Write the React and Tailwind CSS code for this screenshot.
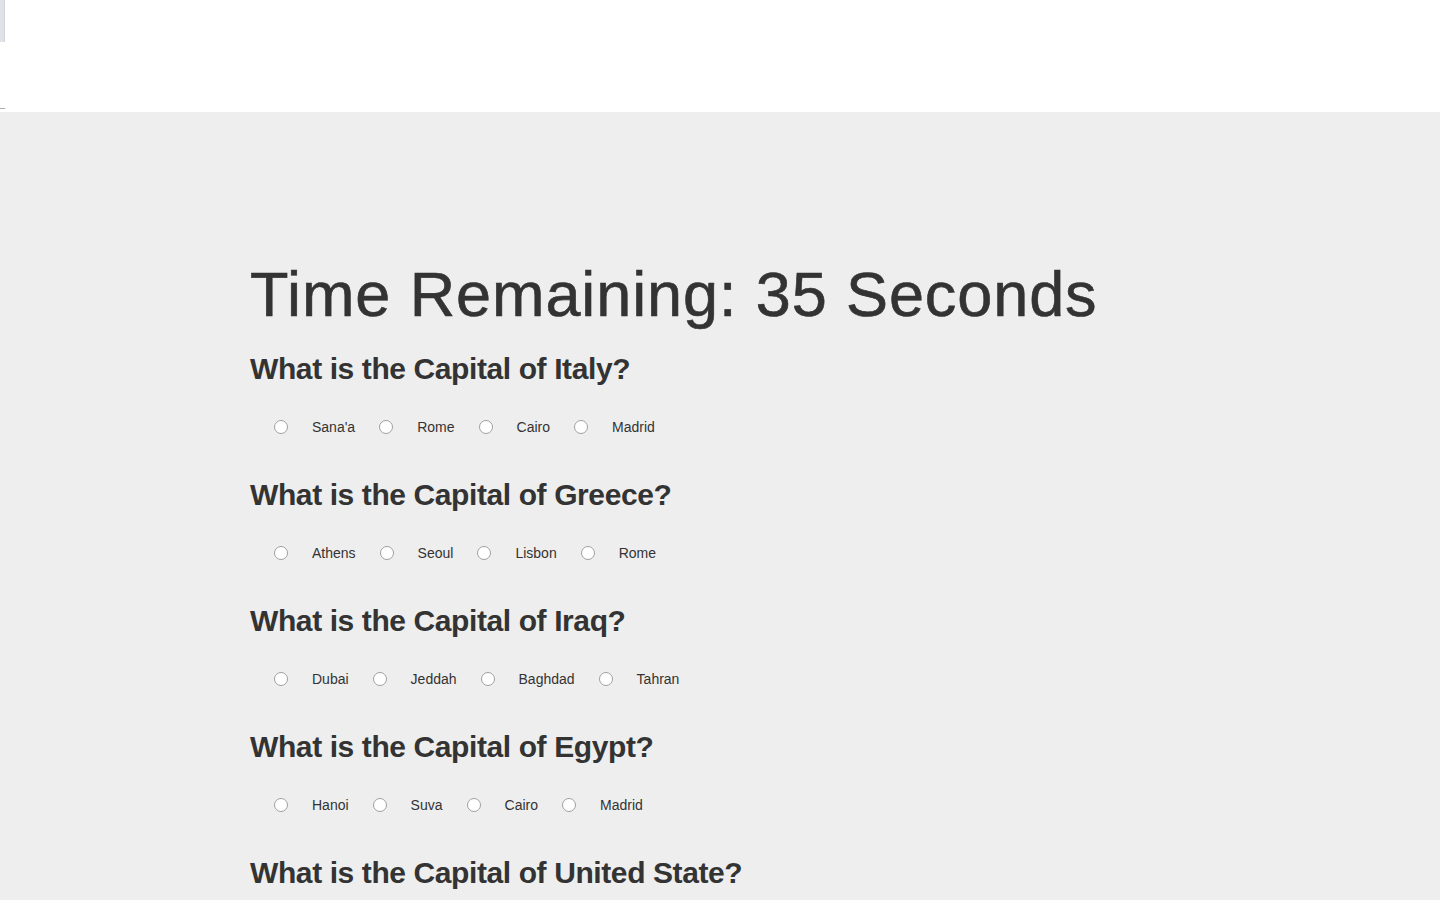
import React from "react";

const questions = [
  { q: "What is the Capital of Italy?", options: ["Sana'a", "Rome", "Cairo", "Madrid"] },
  { q: "What is the Capital of Greece?", options: ["Athens", "Seoul", "Lisbon", "Rome"] },
  { q: "What is the Capital of Iraq?", options: ["Dubai", "Jeddah", "Baghdad", "Tahran"] },
  { q: "What is the Capital of Egypt?", options: ["Hanoi", "Suva", "Cairo", "Madrid"] },
  { q: "What is the Capital of United State?", options: [] },
];

export default function App() {
  return (
    <div className="h-screen overflow-hidden bg-[#eeeeee] font-['Liberation_Sans',Arial,sans-serif] text-[#333333]">
      {/* top bar */}
      <div className="h-[112px] bg-white flex flex-col justify-between">
        <div className="w-[5px] h-[42px] bg-[#dfe3e8] border-r border-[#d0d5db]" />
        <div className="w-[5px] h-px bg-[#aaaaaa] mb-[3px]" />
      </div>

      <div className="pl-[250px] pt-[148px]">
        <h1 className="text-[63px] leading-[69px] font-normal tracking-[0.9px] [-webkit-text-stroke:0.6px_#333333]">
          Time Remaining: 35 Seconds
        </h1>

        <div className="mt-[23px]">
          {questions.map((item, i) => (
            <div key={i} className="h-[126px]">
              <h2 className="text-[30px] leading-[33px] font-bold tracking-[-0.4px]">{item.q}</h2>
              {item.options.length > 0 && (
                <div className="mt-[32px] h-5 flex items-center pl-[24px]">
                  {item.options.map((opt, j) => (
                    <label key={j} className="flex items-center mr-[24px]">
                      <span className="w-[14px] h-[14px] rounded-full bg-white border border-[#a0a0a0]" />
                      <span className="ml-[24px] text-[14px] leading-5">{opt}</span>
                    </label>
                  ))}
                </div>
              )}
            </div>
          ))}
        </div>
      </div>
    </div>
  );
}
